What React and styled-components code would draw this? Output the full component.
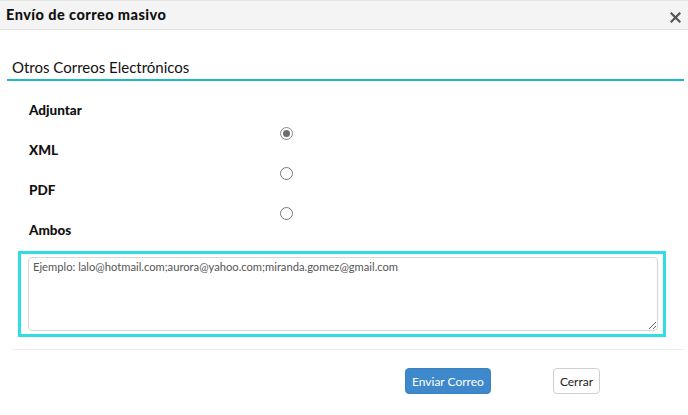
import React from "react";
import styled, { createGlobalStyle } from "styled-components";

const Global = createGlobalStyle`
  html, body { margin: 0; padding: 0; background: #fff; }
  body { font-family: Lato, "Open Sans", sans-serif; color: #111; }
`;

const Modal = styled.div`
  width: 688px;
  min-height: 415px;
  display: flex;
  flex-direction: column;
  background: #fff;
  & > * { flex-shrink: 0; }
`;

const Header = styled.div`
  height: 30px;
  box-sizing: border-box;
  background: #f4f4f4;
  border-top: 1px solid #e6e6e6;
  border-bottom: 1px solid #e2e2e2;
  display: flex;
  align-items: center;
  justify-content: space-between;
  padding: 0 7px 0 6px;
`;

const Title = styled.h4`
  margin: 0;
  font-size: 14.5px;
  font-weight: 900;
  letter-spacing: 0.45px;
  position: relative;
  top: -1px;
`;

const Close = styled.button`
  border: 0;
  background: transparent;
  padding: 0;
  width: 12px;
  height: 12px;
  display: flex;
  align-items: center;
  justify-content: center;
  cursor: pointer;
  position: relative;
  top: 2px;
`;

const Body = styled.div`
  padding: 27px 4px 0 7px;
  display: flex;
  flex-direction: column;
`;

const Section = styled.div`
  font-size: 15px;
  color: #111;
  padding: 0 0 2px 5px;
  border-bottom: 2px solid #1cb9cb;
  line-height: 20px;
`;

const Options = styled.div`
  display: grid;
  grid-template-columns: 251px 30px;
  grid-template-rows: repeat(4, 18px);
  row-gap: 22px;
  padding: 20px 0 0 22px;
`;

const Label = styled.div`
  font-size: 13.5px;
  font-weight: 900;
  line-height: 18px;
  grid-column: 1;
`;

const RadioCell = styled.div`
  grid-column: 2;
  display: flex;
  align-items: center;
  height: 18px;
  transform: translateY(-17px);
`;

const Radio = styled.span`
  width: 13px;
  height: 13px;
  box-sizing: border-box;
  border-radius: 50%;
  border: 1px solid ${p => (p.$checked ? "#8a8a8a" : "#777")};
  display: flex;
  align-items: center;
  justify-content: center;
  background: #fff;
  &::after {
    content: "";
    width: 7px;
    height: 7px;
    border-radius: 50%;
    background: ${p => (p.$checked ? "#6e6e6e" : "transparent")};
  }
`;

const Focus = styled.div`
  margin: 12px 18px 0 11px;
  border: 3px solid #2fdde2;
  padding: 3px 5px 3px 7px;
  display: flex;
`;

const Area = styled.textarea`
  flex: 1;
  height: 74px;
  box-sizing: border-box;
  border: 1px solid #d6d6d6;
  border-radius: 4px;
  padding: 2px 4px;
  font-family: Lato, "Open Sans", sans-serif;
  font-size: 11.2px;
  color: #333;
  resize: vertical;
  outline: none;
  &::placeholder { color: #555; }
`;

const Divider = styled.div`
  height: 1px;
  background: #ececec;
  margin: 12px 0 0 5px;
`;

const Footer = styled.div`
  display: flex;
  align-items: center;
  padding: 18px 0 0 405px;
  gap: 62px;
`;

const Button = styled.button`
  height: 26px;
  box-sizing: border-box;
  border-radius: 4px;
  font-family: Lato, "Open Sans", sans-serif;
  font-size: 12px;
  padding: 0 6px;
  cursor: pointer;
  ${p =>
    p.$primary
      ? `background:#3e89cb;border:1px solid #3a82c2;color:#fff;`
      : `background:#fff;border:1px solid #cfcfcf;color:#222;`}
`;

export default function App() {
  const opts = ["XML", "PDF", "Ambos"];
  return (
    <Modal>
      <Global />
      <Header>
        <Title>Envío de correo masivo</Title>
        <Close aria-label="Cerrar">
          <svg width="11" height="11" viewBox="0 0 11 11">
            <path d="M1.5 1.5 L9.5 9.5 M9.5 1.5 L1.5 9.5" stroke="#555" strokeWidth="2.2" strokeLinecap="square" />
          </svg>
        </Close>
      </Header>
      <Body>
        <Section>Otros Correos Electrónicos</Section>
        <Options>
          <Label>Adjuntar</Label>
          <div />
          {opts.map((o, i) => (
            <React.Fragment key={o}>
              <Label>{o}</Label>
              <RadioCell>
                <Radio $checked={i === 0} />
              </RadioCell>
            </React.Fragment>
          ))}
        </Options>
        <Focus>
          <Area placeholder="Ejemplo: lalo@hotmail.com;aurora@yahoo.com;miranda.gomez@gmail.com" />
        </Focus>
        <Divider />
      </Body>
      <Footer>
        <Button $primary>Enviar Correo</Button>
        <Button>Cerrar</Button>
      </Footer>
    </Modal>
  );
}
